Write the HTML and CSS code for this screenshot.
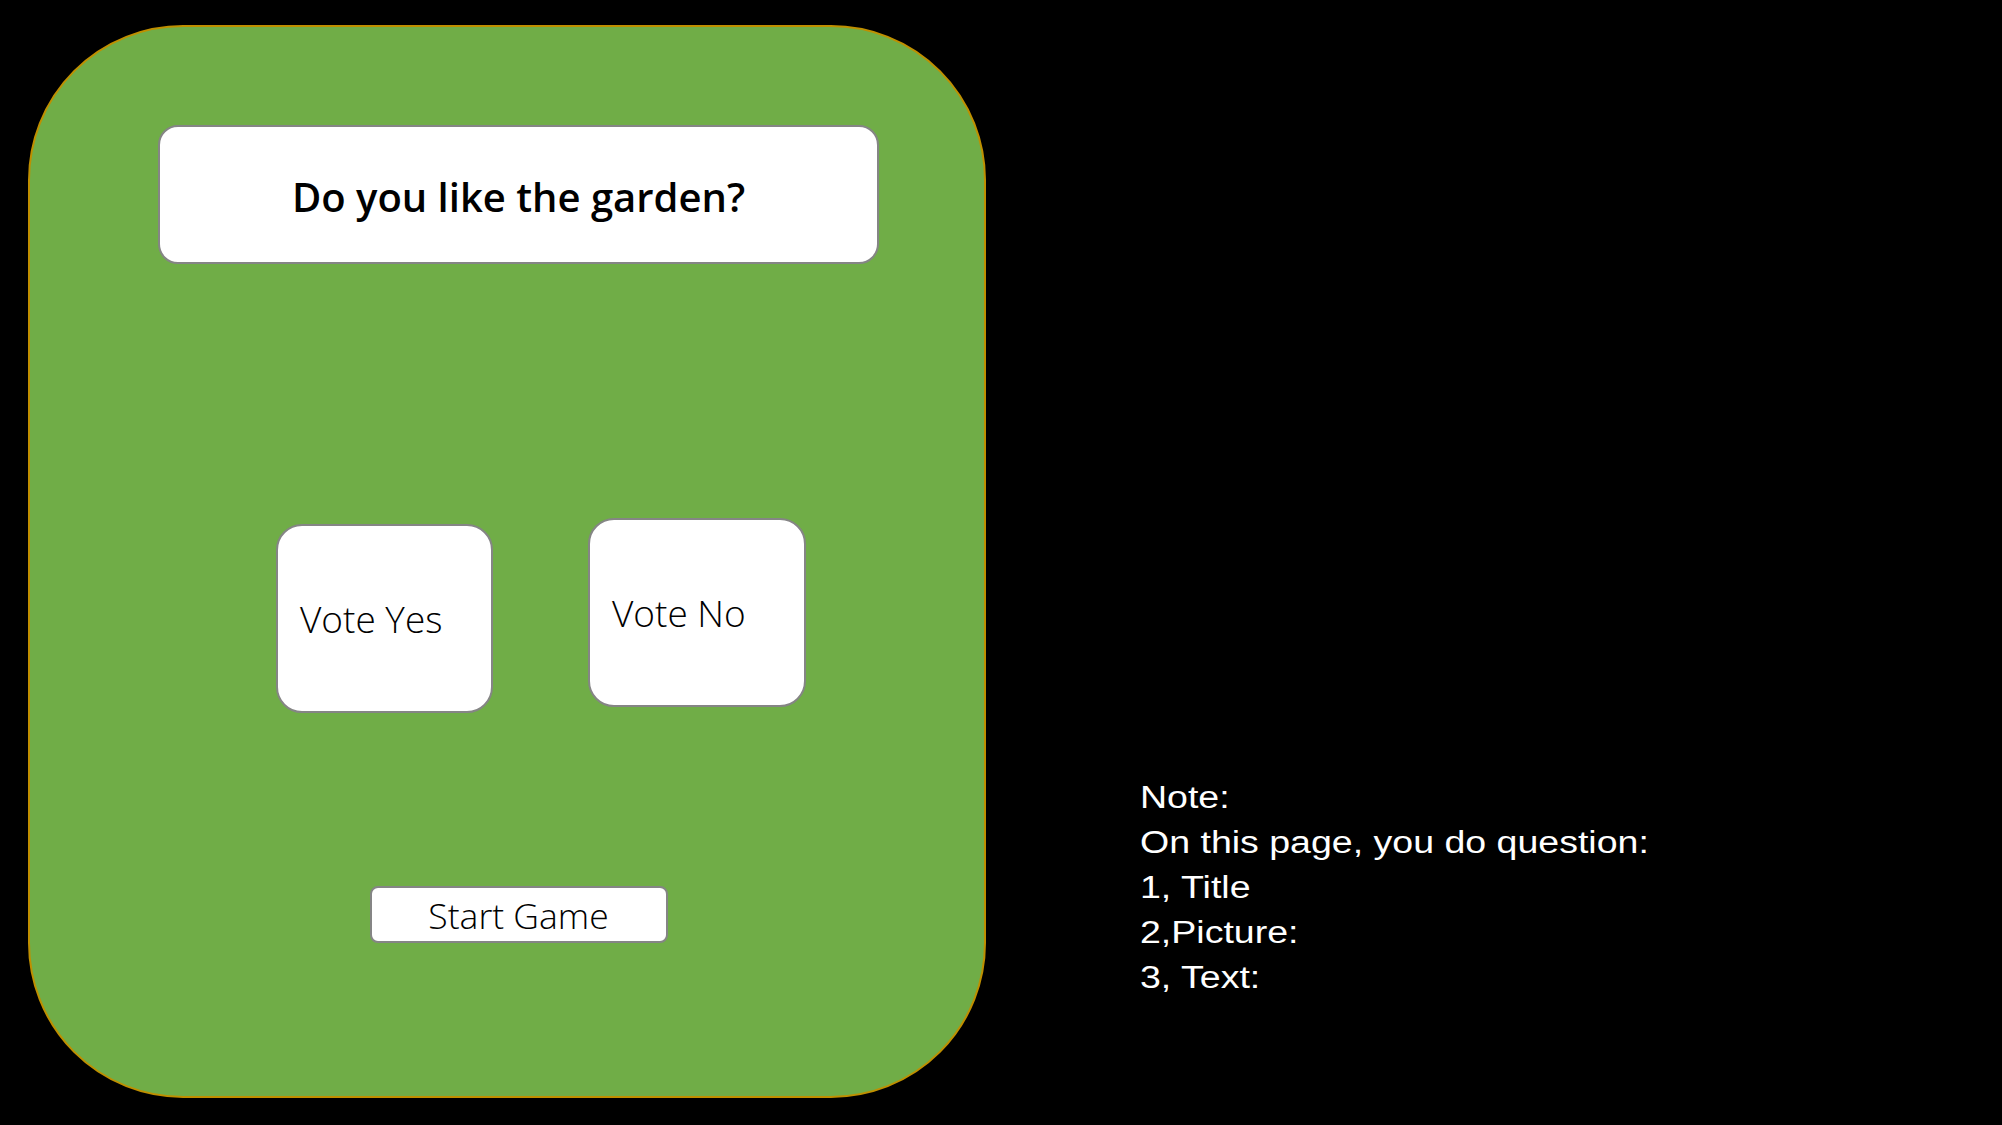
FILE: index.html
```html
<!DOCTYPE html>
<html lang="en">
<head>
<meta charset="utf-8">
<title>Vote</title>
<link rel="stylesheet" href="styles.css">
</head>
<body>
<div class="page">
  <div class="panel">
    <div class="column">
      <div class="title-box">Do you like the garden?</div>
      <div class="votes">
        <div class="vote vote-yes">Vote Yes</div>
        <div class="vote vote-no">Vote No</div>
      </div>
      <div class="start">Start Game</div>
    </div>
  </div>
  <div class="note">
    <div class="line">Note:</div>
    <div class="line">On this page, you do question:</div>
    <div class="line">1, Title</div>
    <div class="line">2,Picture:</div>
    <div class="line">3, Text:</div>
  </div>
</div>
</body>
</html>
```

FILE: styles.css
```css
* { box-sizing: border-box; }
html, body {
  margin: 0;
  padding: 0;
  background: #000;
}
.page {
  width: 2002px;
  height: 1125px;
  display: flex;
  align-items: flex-start;
  padding: 25px 0 0 28px;
}
.panel {
  width: 958px;
  height: 1073px;
  background: #70ad47;
  border: 2px solid #bf8f00;
  border-radius: 155px;
  padding: 98px 0 0 128px;
}
.column {
  width: 721px;
  display: flex;
  flex-direction: column;
}
.title-box {
  height: 139px;
  background: #fff;
  border: 2px solid #858585;
  border-radius: 20px;
  display: flex;
  align-items: center;
  justify-content: center;
  padding-top: 3px;
  font-family: "Open Sans", "Noto Sans", sans-serif;
  font-weight: 600;
  font-size: 40px;
  color: #000;
}
.votes {
  display: flex;
  align-items: flex-start;
  gap: 95px;
  margin-top: 254px;
  padding-left: 118px;
}
.vote {
  width: 217px;
  height: 189px;
  background: #fff;
  border: 2px solid #858585;
  border-radius: 26px;
  display: flex;
  align-items: center;
  padding-left: 22px;
  font-family: "Open Sans", "Noto Sans", sans-serif;
  font-weight: 300;
  font-size: 37px;
  color: #000;
}
.vote-yes { margin-top: 6px; }
.vote-no { width: 218px; }
.start {
  align-self: center;
  margin-top: 173px;
  width: 298px;
  height: 57px;
  background: #fff;
  border: 2px solid #858585;
  border-radius: 8px;
  display: flex;
  align-items: center;
  justify-content: center;
  font-family: "Open Sans", "Noto Sans", sans-serif;
  font-weight: 300;
  font-size: 35.5px;
  color: #000;
}
.note {
  margin-left: 154px;
  margin-top: 750px;
  color: #fff;
  font-family: "Liberation Sans", Arial, sans-serif;
  font-size: 31px;
  line-height: 45px;
  transform: scaleX(1.21);
  transform-origin: left top;
  white-space: nowrap;
}
```
